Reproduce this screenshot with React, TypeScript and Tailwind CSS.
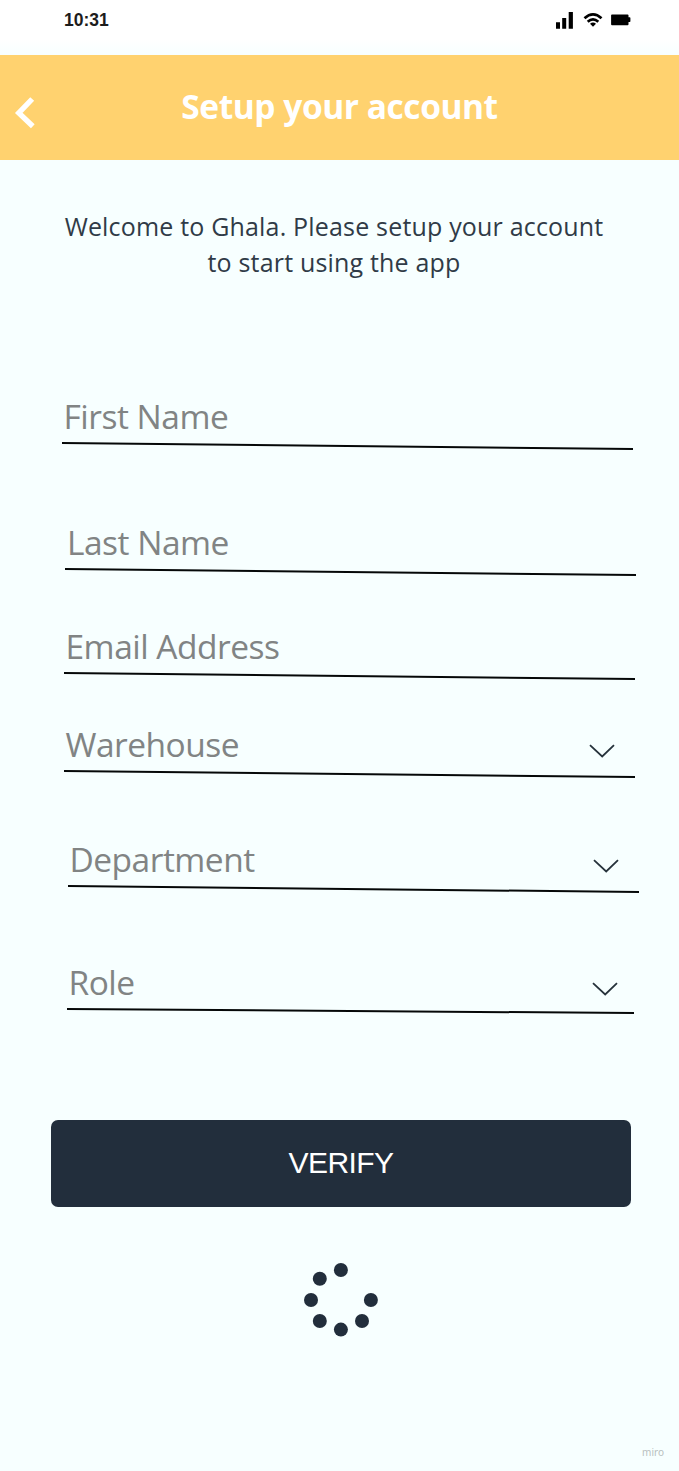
type FieldProps = {
  label: string;
  place: string;
  select?: boolean;
  end?: [number, number];
};

function Field({ label, place, select = false, end = [571, 9] }: FieldProps) {
  return (
    <div className={`h-[60px] w-[572px] ${place}`}>
      <div className="flex h-10 items-center justify-between pl-[2px] pr-[19px]">
        <span className="whitespace-nowrap font-['Open_Sans',sans-serif] text-[33.5px] leading-10 tracking-[-0.5px] text-[#818484]">
          {label}
        </span>
        {select && (
          <svg className="mt-[14px] h-4 w-7" viewBox="0 0 28 16" fill="none" stroke="#26323b" strokeWidth="1.8">
            <path d="M1 2.2 13.2 13.5 25 2.2" />
          </svg>
        )}
      </div>
      <svg className="block h-5 w-[572px]" viewBox="0 -4 572 20" stroke="#050808" strokeWidth="2">
        <line x1="0" y1="3" x2={end[0]} y2={end[1]} />
      </svg>
    </div>
  );
}

export default function App() {
  return (
    <div className="flex h-[1471px] w-[679px] flex-col overflow-hidden bg-[#f7ffff]">
      <div className="flex h-10 items-center justify-between bg-white pl-16 pr-12">
        <span className="font-['Liberation_Sans',sans-serif] text-[17.5px] font-bold leading-10 text-[#1c1c1c]">
          10:31
        </span>
        <svg className="h-5 w-[76px]" viewBox="555 10 76 20" fill="#000">
          <path d="M556 22.3h4v6.4h-4zM562.2 18h4v10.7h-4zM568.7 12h4.2v16.7h-4.2z" />
          <g fill="none" stroke="#000" strokeWidth="2.7">
            <path d="M584.5 18.2Q593 10.5 601.5 18.2" />
            <path d="M587.7 21.8Q593 17 598.3 21.8" />
          </g>
          <path d="M590 23.7Q593 21.2 596 23.7L593 26.7Z" />
          <path d="M612 14.4h15.6q.9 0 .9.9v2h1.2q.7 0 .7.7v3.2q0 .7-.7.7h-1.2v2.4q0 .9-.9.9H612q-.9 0-.9-.9v-9q0-.9.9-.9z" />
        </svg>
      </div>
      <div className="h-[15px] bg-gradient-to-b from-white to-[#f7ffff]" />
      <header className="grid h-[105px] grid-cols-[60px_1fr_60px] items-center bg-[#ffd26f]">
        <svg className="ml-[14px] mt-[11px] h-8 w-6" viewBox="0 0 24 32" fill="none" stroke="#fff" strokeWidth="5.4">
          <path d="M18.2 2 4.8 16 18.8 29.2" />
        </svg>
        <h1 className="whitespace-nowrap pb-[2px] text-center font-['Open_Sans',sans-serif] text-[33.5px] font-bold leading-[45px] tracking-[-0.45px] text-white">
          Setup your account
        </h1>
      </header>
      <p className="mr-[11px] mt-[48px] whitespace-nowrap text-center font-['Open_Sans',sans-serif] text-[25px] leading-9 tracking-[0.18px] text-[#303b47]">
        Welcome to Ghala. Please setup your account
        <br />
        to start using the app
      </p>
      <main className="mt-[116px] flex flex-col">
        <Field label="First Name" place="ml-[61.5px]" />
        <Field label="Last Name" place="ml-[65px] mt-[66px]" />
        <Field label="Email Address" place="ml-[63.5px] mt-[44px]" />
        <Field label="Warehouse" place="ml-[63.5px] mt-[38px]" select />
        <Field label="Department" place="ml-[67.5px] mt-[55px]" select />
        <Field label="Role" place="ml-[66.5px] mt-[63px]" select end={[567, 7]} />
      </main>
      <button className="ml-[51px] mt-[98px] h-[87px] w-[580px] rounded-[7px] bg-[#222e3c] pb-[2px] font-['Liberation_Sans',sans-serif] text-[30px] tracking-[-0.6px] text-white">
        VERIFY
      </button>
      <svg className="ml-[301px] mt-[53px] h-20 w-20" viewBox="301 1260 80 80" fill="#222e3c">
        <circle cx="340.9" cy="1270" r="7" />
        <circle cx="319.8" cy="1278.8" r="7" />
        <circle cx="311" cy="1300" r="7" />
        <circle cx="319.8" cy="1321" r="7" />
        <circle cx="340.9" cy="1329.6" r="7" />
        <circle cx="362" cy="1321" r="7" />
        <circle cx="370.9" cy="1300" r="7" />
      </svg>
      <footer className="mr-[15px] mt-auto pb-[11px] text-right font-['Noto_Sans',sans-serif] text-[10px] leading-4 text-[#b9bfc0]">
        miro
      </footer>
    </div>
  );
}
